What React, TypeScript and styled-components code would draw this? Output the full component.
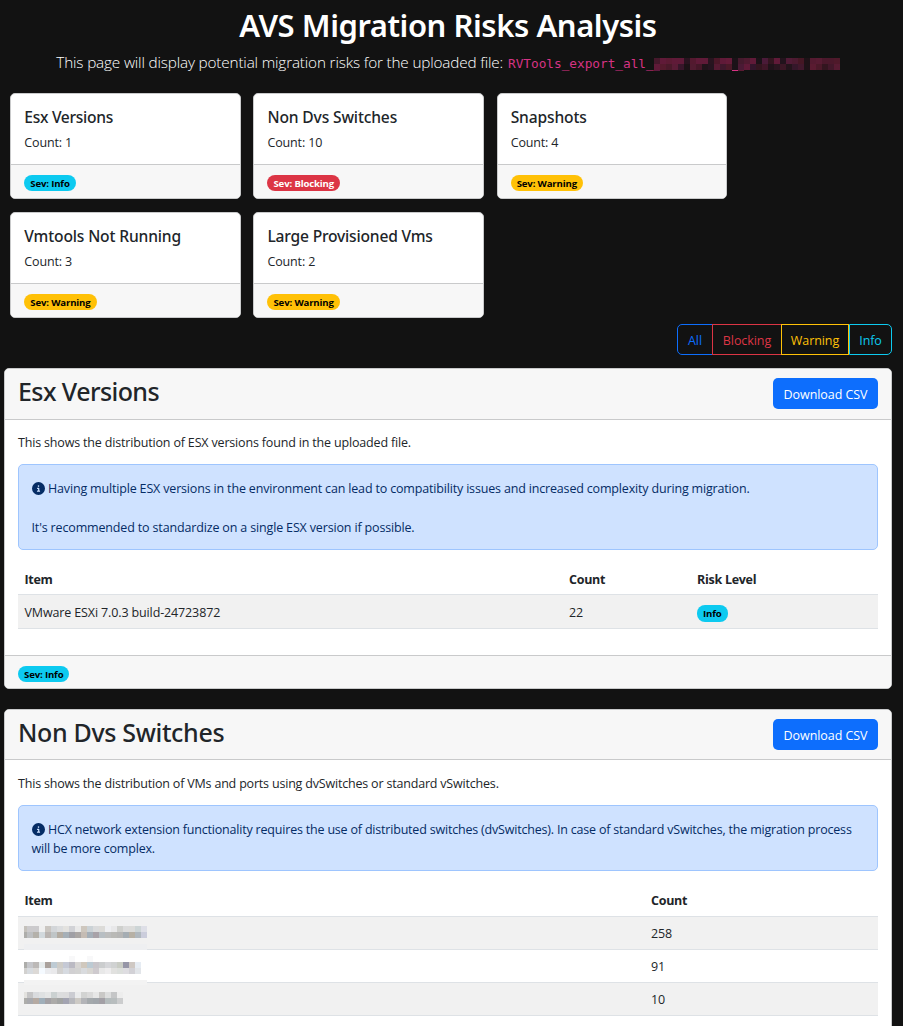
import React from 'react';
import styled, { createGlobalStyle, css } from 'styled-components';
import { FaCircleInfo } from 'react-icons/fa6';

type Severity = 'Info' | 'Blocking' | 'Warning';

const GlobalStyle = createGlobalStyle`
  *, *::before, *::after { box-sizing: border-box; }
  html { background: #121212; }
  body {
    margin: 0;
    background: #121212;
    color: #212529;
    font-family: "Open Sans", "Noto Sans", sans-serif;
    font-size: 12.5px;
    line-height: 19px;
    letter-spacing: -0.16px;
  }
  h1, h2, h5, p { margin: 0; }
`;

const Page = styled.main`
  height: 1026px;
  overflow: hidden;
  padding: 6px 11px 0 4px;
`;

const PageTitle = styled.h1`
  color: #fff;
  font: 600 31px/38px "Noto Sans", sans-serif;
  letter-spacing: -0.45px;
  text-align: center;
`;

const Lead = styled.p`
  display: flex;
  justify-content: center;
  align-items: center;
  height: 24px;
  margin-top: 7px;
  color: #fff;
  font-size: 15.3px;
  font-weight: 300;
  letter-spacing: -0.16px;
  white-space: pre;
`;

const LeadText = styled.span`
  margin-top: -2px;
`;

const FileName = styled.code`
  display: flex;
  align-items: center;
  margin-left: 5px;
  padding-top: 2px;
  color: #d63384;
  font: 400 12.8px/24px "DejaVu Sans Mono", monospace;
  letter-spacing: -0.04px;
`;

const SummaryGrid = styled.section`
  display: grid;
  grid-template-columns: repeat(3, 230.4px);
  gap: 13px 12.8px;
  padding: 18px 6px 0 6.3px;
`;

const Panel = styled.article`
  display: flex;
  flex-direction: column;
  border: 1px solid #c9cacb;
  border-radius: 5px;
  background: #fff;
  overflow: hidden;
`;

const SummaryBody = styled.div`
  height: 70px;
  padding: 14px 13px 0;
`;

const SummaryTitle = styled.h5<{ $spacing?: number }>`
  font: 500 15.6px/19px "Noto Sans", sans-serif;
  letter-spacing: ${p => p.$spacing ?? -0.15}px;
`;

const SummaryCount = styled.p`
  margin-top: 6px;
  letter-spacing: -0.15px;
`;

const PanelFooter = styled.footer<{ $height: number; $top: number }>`
  display: flex;
  align-items: flex-start;
  height: ${p => p.$height}px;
  padding: ${p => p.$top}px 13px 0;
  border-top: 1px solid #c9cacb;
  background: #f7f7f7;
`;

const badgeColors = {
  Info: css`background: #0dcaf0; color: #000;`,
  Warning: css`background: #ffc107; color: #000;`,
  Blocking: css`background: #dc3545; color: #fff;`,
};

const Badge = styled.span<{ $severity: Severity }>`
  display: inline-block;
  padding: 0 6px;
  height: 16px;
  border-radius: 8px;
  font-size: 9.6px;
  line-height: 17px;
  font-weight: 700;
  letter-spacing: -0.15px;
  ${p => badgeColors[p.$severity]}
`;

const FilterBar = styled.div`
  display: flex;
  justify-content: flex-end;
  margin: 6px 0 13px;
`;

const FilterButton = styled.button<{ $color: string; $width: number }>`
  width: ${p => p.$width}px;
  height: 31px;
  padding: 2px 0 0;
  border: 1px solid ${p => p.$color};
  background: transparent;
  color: ${p => p.$color};
  font: inherit;
  letter-spacing: -0.08px;
  & + & { margin-left: -1px; }
  &:first-child { border-radius: 5px 0 0 5px; }
  &:last-child { border-radius: 0 5px 5px 0; margin-left: 0; }
`;

const RiskCard = styled(Panel)`
  & + & { margin-top: 20px; }
`;

const RiskHeader = styled.header<{ $height: number }>`
  display: flex;
  justify-content: space-between;
  align-items: flex-start;
  height: ${p => p.$height}px;
  padding: 9px 13px 0;
  border-bottom: 1px solid #c9cacb;
  background: #f7f7f7;
`;

const RiskTitle = styled.h2<{ $spacing: number }>`
  margin-top: -2px;
  font: 500 25px/30px "Noto Sans", sans-serif;
  letter-spacing: ${p => p.$spacing}px;
`;

const DownloadButton = styled.button`
  width: 105px;
  height: 31px;
  padding: 1px 0 0;
  border: 0;
  border-radius: 5px;
  background: #0d6efd;
  color: #fff;
  font: inherit;
  letter-spacing: -0.06px;
`;

const RiskBody = styled.div<{ $top: number }>`
  padding: ${p => p.$top}px 13px 26px;
`;

const Description = styled.p<{ $spacing?: number }>`
  letter-spacing: ${p => p.$spacing ?? -0.17}px;
`;

const Alert = styled.div`
  margin: 12px 0 13px;
  padding: 14px 12px 11px 12.5px;
  border: 1px solid #9ec5fe;
  border-radius: 5px;
  background: #cfe2ff;
  color: #052c65;
  svg { margin-right: 3.5px; vertical-align: -2px; }
`;

const AlertText = styled.p<{ $spacing: number }>`
  padding-bottom: 1px;
  letter-spacing: ${p => p.$spacing}px;
  & + & { margin-top: 19px; }
`;

const Table = styled.table`
  width: 100%;
  table-layout: fixed;
  border-collapse: separate;
  border-spacing: 0;
  text-align: left;
`;

const Column = styled.col<{ $width?: number }>`
  width: ${p => (p.$width ? `${p.$width}px` : 'auto')};
`;

const HeadCell = styled.th<{ $height: number }>`
  height: ${p => p.$height}px;
  padding: 7px 6.5px 0;
  border-bottom: 1px solid #dee2e6;
  font-weight: 700;
  letter-spacing: -0.28px;
  vertical-align: top;
`;

const Row = styled.tr<{ $height: number }>`
  height: ${p => p.$height}px;
  &:nth-child(odd) { background: #f1f1f1; }
`;

const Cell = styled.td`
  padding: 2px 6.5px 0;
  border-bottom: 1px solid #dee2e6;
  letter-spacing: -0.13px;
`;

const RiskBadge = styled(Badge)`
  height: 17px;
  vertical-align: middle;
`;

const NameCell = styled(Cell)`
  position: relative;
`;

const CountCell = styled(Cell)`
  padding-top: 0;
`;

const Redaction = styled.svg`
  display: block;
  flex: none;
`;

const NameRedaction = styled(Redaction)`
  position: absolute;
  left: 6px;
  top: 0;
  z-index: 1;
`;

const fileMask = [
  '45182b 601a38 5c1a33 601a38 601a38 29131f 54192f 601a38 601a38 28141f 4b1728 601a38 651b39 1b1218 451a2d 4f1a30 601a38 1b1218 4a1a38 33151f 601a38 22131c 511b36 4c1a30 451724 1e1217 541a30 571b32 4b182b 4b182b 4f192a',
  '601a38 551a2d 4a192a 5a1c36 38162a 1c1216 511b30 451728 20131a 25141f 551a32 3f182c 4b1928 1b1218 4b1a35 601a38 33152b 33151f 3f1628 20131a 2a151f 3b1725 23141b 35172a 41182c 1e1217 5a1b31 4b1929 33151f 42182a 571b32',
].map(row => row.split(' '));

const nameMasks = [
  {
    y: 9,
    edge: ['#c4c1bb', '#adadaa'],
    rows: [
      'cbcacc cbcacc efefef cac6c1 d3d6d9 dbdddf e3e2df d1d2d6 e9e9e9 cec7be cbd2d6 dadbdc dcdbd8 eeeff2 e8e8e9 cfd0cd dcdcdc dcdcda cdd5d6 dedfe7',
      'bdbfc1 b4b1aa d2d9dd bab5b2 bfc5c7 b3aca2 a5afb7 9f9fa5 aaa6a4 c5bcb4 a5afb8 a8a2a8 b7bec3 bcbdbd b9b9b6 b6b6b5 a5adb3 b7b1a5 b0b8be cbcddc',
    ],
  },
  {
    y: 12,
    edge: ['#adadaa', '#d2d1cf'],
    rows: [
      'c5c6ca bcb9b7 e6ebec aaa19c becbd4 ceccc7 c5c9d5 bbbac3 d7d5d3 d0c8bd bccad3 c8c5ca cbcdce d5d6d9 d0d2d2 c9ccc4 9696a7 cfc8c3 e6ecf3',
      'd7dbdf dcd9d6 f5faff ebecef e9e9eb d2d1d0 d6dae0 d1d0d2 d3d3d2 d9dbde d8d6d2 cecace e8e8e8 eeedee e1e1df dcdfdc dedde1 d2d1d6 e2e5e9',
    ],
  },
  {
    y: 9,
    edge: ['#e3e2df', '#adadaa'],
    rows: [
      'c5c5c6 d9dbde dfe1e2 e5e6e6 cbd1d1 dcddde dcdcdd cbccd2 eaebec d2d3d2 dadada e7e7e7 c9c8c6 dddede c5c6c7 ededed',
      'a8a9ad b5aaa2 a0afba a3a1a5 acaba9 a2a4a3 a3a4b2 b7b8bd cdcac5 b3b4b8 a4a9ac a1a6ab a3a0a6 b5bcbd b8bdbe cccdce',
    ],
  },
].map(mask => ({ ...mask, rows: mask.rows.map(row => row.split(' ')) }));

function FileMask() {
  return (
    <Redaction width="186" height="15" viewBox="0 0 186 15" shapeRendering="crispEdges">
      {fileMask.map((row, y) =>
        row.map((fill, x) => <rect key={`${x}-${y}`} x={x * 6} y={1 + y * 6} width="6" height="6" fill={`#${fill}`} />),
      )}
      <rect x="0" y="13" width="6" height="1" fill="#5c1a40" />
      <rect x="78" y="13" width="6" height="1" fill="#d63384" />
      <rect x="84" y="13" width="6" height="1" fill="#5c1a33" />
    </Redaction>
  );
}

function NameMask({ index }: { index: number }) {
  const mask = nameMasks[index];
  return (
    <NameRedaction width="123" height="35" viewBox="0 0 123 35" shapeRendering="crispEdges">
      {index === 0 && <rect x="0" y="27" width="123" height="6" fill="#eeeff1" />}
      {index === 1 && (
        <>
          <rect x="0" y="30" width="123" height="5" fill="#f3f3f3" />
          <rect x="45" y="6" width="6" height="6" fill="#f8f8f9" />
          <rect x="63" y="6" width="6" height="6" fill="#f8f8f9" />
        </>
      )}
      {mask.rows.map((row, y) => (
        <React.Fragment key={y}>
          <rect x="0" y={mask.y + y * 6} width="3" height="6" fill={mask.edge[y]} />
          {row.map((fill, x) => (
            <rect key={x} x={3 + x * 6} y={mask.y + y * 6} width="6" height="6" fill={`#${fill}`} />
          ))}
        </React.Fragment>
      ))}
    </NameRedaction>
  );
}

const summaries: { title: string; count: number; severity: Severity; spacing?: number }[] = [
  { title: 'Esx Versions', count: 1, severity: 'Info', spacing: -0.3 },
  { title: 'Non Dvs Switches', count: 10, severity: 'Blocking' },
  { title: 'Snapshots', count: 4, severity: 'Warning' },
  { title: 'Vmtools Not Running', count: 3, severity: 'Warning' },
  { title: 'Large Provisioned Vms', count: 2, severity: 'Warning', spacing: -0.2 },
];

export default function App() {
  return (
    <>
      <GlobalStyle />
      <Page>
        <PageTitle>AVS Migration Risks Analysis</PageTitle>
        <Lead>
          <LeadText>This page will display potential migration risks for the uploaded file:</LeadText>
          <FileName><span>RVTools_export_all_</span><FileMask /></FileName>
        </Lead>

        <SummaryGrid>
          {summaries.map(item => (
            <Panel key={item.title}>
              <SummaryBody>
                <SummaryTitle $spacing={item.spacing}>{item.title}</SummaryTitle>
                <SummaryCount>Count: {item.count}</SummaryCount>
              </SummaryBody>
              <PanelFooter $height={34} $top={10}>
                <Badge $severity={item.severity}>Sev: {item.severity}</Badge>
              </PanelFooter>
            </Panel>
          ))}
        </SummaryGrid>

        <FilterBar>
          <FilterButton $color="#0d6efd" $width={36}>All</FilterButton>
          <FilterButton $color="#dc3545" $width={70}>Blocking</FilterButton>
          <FilterButton $color="#ffc107" $width={68}>Warning</FilterButton>
          <FilterButton $color="#0dcaf0" $width={43}>Info</FilterButton>
        </FilterBar>

        <RiskCard>
          <RiskHeader $height={51}>
            <RiskTitle $spacing={-0.58}>Esx Versions</RiskTitle>
            <DownloadButton>Download CSV</DownloadButton>
          </RiskHeader>
          <RiskBody $top={13}>
            <Description>This shows the distribution of ESX versions found in the uploaded file.</Description>
            <Alert>
              <AlertText $spacing={-0.17}>
                <FaCircleInfo size={13} />
                Having multiple ESX versions in the environment can lead to compatibility issues and increased complexity during migration.
              </AlertText>
              <AlertText $spacing={-0.155}>It's recommended to standardize on a single ESX version if possible.</AlertText>
            </Alert>
            <Table>
              <colgroup>
                <Column $width={544.5} />
                <Column $width={128} />
                <Column />
              </colgroup>
              <thead>
                <tr>
                  <HeadCell $height={32}>Item</HeadCell>
                  <HeadCell $height={32}>Count</HeadCell>
                  <HeadCell $height={32}>Risk Level</HeadCell>
                </tr>
              </thead>
              <tbody>
                <Row $height={34}>
                  <Cell>VMware ESXi 7.0.3 build-24723872</Cell>
                  <Cell>22</Cell>
                  <Cell><RiskBadge $severity="Info">Info</RiskBadge></Cell>
                </Row>
              </tbody>
            </Table>
          </RiskBody>
          <PanelFooter $height={33} $top={10}>
            <Badge $severity="Info">Sev: Info</Badge>
          </PanelFooter>
        </RiskCard>

        <RiskCard>
          <RiskHeader $height={50}>
            <RiskTitle $spacing={-0.34}>Non Dvs Switches</RiskTitle>
            <DownloadButton>Download CSV</DownloadButton>
          </RiskHeader>
          <RiskBody $top={14}>
            <Description $spacing={-0.19}>This shows the distribution of VMs and ports using dvSwitches or standard vSwitches.</Description>
            <Alert>
              <AlertText $spacing={-0.195}>
                <FaCircleInfo size={13} />
                HCX network extension functionality requires the use of distributed switches (dvSwitches). In case of standard vSwitches, the migration process will be more complex.
              </AlertText>
            </Alert>
            <Table>
              <colgroup>
                <Column $width={626.5} />
                <Column />
              </colgroup>
              <thead>
                <tr>
                  <HeadCell $height={33}>Item</HeadCell>
                  <HeadCell $height={33}>Count</HeadCell>
                </tr>
              </thead>
              <tbody>
                {[258, 91, 10].map((count, index) => (
                  <Row key={count} $height={33}>
                    <NameCell><NameMask index={index} /></NameCell>
                    <CountCell>{count}</CountCell>
                  </Row>
                ))}
              </tbody>
            </Table>
          </RiskBody>
        </RiskCard>
      </Page>
    </>
  );
}
